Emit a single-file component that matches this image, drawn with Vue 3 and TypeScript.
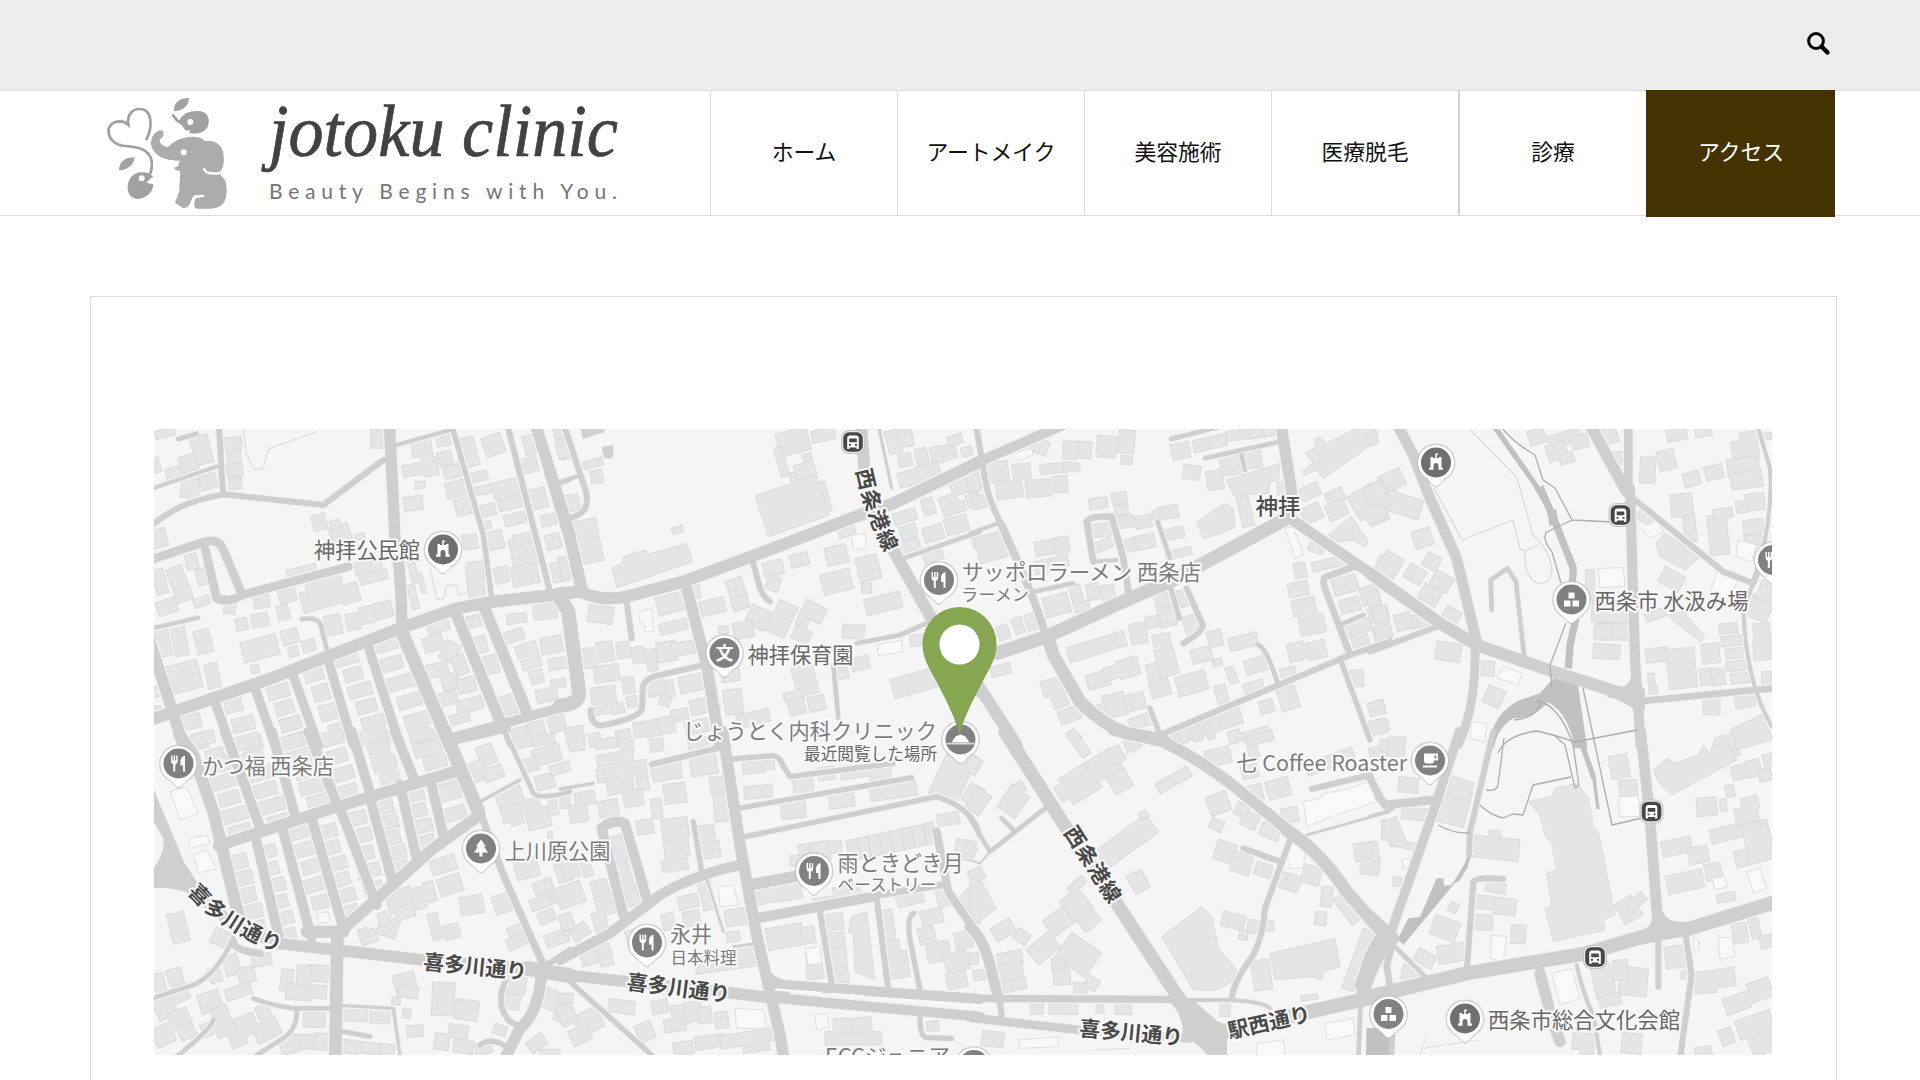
<script setup lang="ts">
interface Sheet {
  x: number
  y: number
  /** roads: [width, path] in third-of-a-pixel units */
  roads: [number, string][]
  /** single buildings: cx, cy, width, height, angle */
  houses: number[][]
  /** rows of buildings: x1, y1, x2, y2, count, width, height, angle */
  rows: number[][]
  shapes?: string[]
  areas?: string[]
  water?: string[]
  streams?: [number, string][]
  paths?: string[]
  outlines?: string[]
}

const sheets: Sheet[] = [
  {
    x: 150, y: 425,
    roads: [
      [18, 'M205,0C215,60 210,120 220,205'], [12, 'M0,193L200,125'],
      [18, 'M0,303C60,260 100,230 220,208L520,240L700,105'], [14, 'M85,42L140,26'],
      [26, 'M0,405L165,350Q205,340 218,370L275,505'], [26, 'M165,370L200,520Q240,535 275,510L595,425'],
      [13, 'M0,612L145,578'], [34, 'M718,0L730,230L735,350Q755,450 755,600'], [12, 'M740,60L900,15'],
      [16, 'M905,0L1000,330L1025,520'], [18, 'M1072,0L1200,500'], [34, 'M1157,0L1260,330'],
      [36, 'M0,885L350,765L750,610L920,550L1030,530L1260,505'], [34, 'M0,650L100,960'],
      [28, 'M195,830L240,960M315,790L375,960M425,740L505,960M530,690L610,960M650,650L750,960'],
      [40, 'M755,620L900,960'], [34, 'M915,560L1055,900M1000,540L1130,860'],
      [28, 'M900,940L1080,890L1260,840'], [28, 'M1235,520L1260,580'],
      [14, 'M455,582Q505,575 512,600L530,670'], [16, 'M1060,910L1080,960'], [12, 'M1220,180L1260,165'],
    ],
    houses: [
      [155,75,55,85,-15],[115,115,50,50,-20],[70,145,45,35,-15],[120,190,55,60,8],[175,170,50,45,-15],[25,340,50,55,-15],[20,120,20,45,-15],[45,25,60,24,-15],
      [680,42,36,55,0],[508,292,42,48,-15],[570,325,60,50,-20],[555,298,30,25,-15],[455,437,90,24,-14],[630,335,30,18,-15],
      [80,455,50,60,-20],[30,470,36,75,-15],[100,508,52,42,-18],[50,545,60,44,-18],[125,410,36,45,-15],[155,455,30,50,-15],[155,530,48,28,-20],
      [40,655,42,80,-10],[90,650,42,85,-10],[160,650,48,70,-15],[105,755,92,85,-15],[188,752,40,75,-12],[240,548,36,36,10],
      [275,598,36,36,-12],[330,585,50,40,-10],[335,530,48,38,-10],[400,562,36,45,-15],[412,512,52,40,-15],[330,670,110,62,-15],[315,732,24,24,-10],[420,635,50,45,-15],[430,680,30,30,-15],[476,662,40,36,-15],
      [510,520,115,62,-16],[600,505,55,58,-16],[520,470,110,40,-16],[550,600,50,60,-12],[608,590,40,50,-10],[650,570,40,50,-12],[700,555,55,50,-15],[670,455,85,32,-15],[655,425,80,40,-12],
      [815,70,60,50,-8],[785,135,55,35,-10],[840,125,45,55,-10],[885,100,44,42,-12],[880,45,40,35,-12],[905,140,50,40,-15],[810,180,30,22,-8],[790,235,58,42,-8],[920,192,66,48,-15],[940,245,48,50,-15],[960,80,40,90,-14],[1030,60,60,60,-20],
      [985,155,55,30,-14],[1070,190,85,50,-14],[1000,195,50,26,-12],[1015,255,45,36,-12],[1080,235,70,36,-14],[1095,282,65,34,-14],[1010,300,26,22,-12],[1035,345,50,55,-14],[1120,380,75,85,-12],[1120,340,60,30,-12],[1055,450,42,48,-12],[1125,450,80,60,-12],[960,350,44,45,-10],
      [978,465,48,110,-3],[790,440,22,70,-14],[790,515,22,75,-14],[815,475,14,60,-14],
      [1140,60,36,60,-14],[1140,120,45,45,-14],[1165,220,50,60,-14],[1195,285,45,34,-14],[1210,350,45,45,-14],[1230,440,50,60,-12],[1235,25,45,40,-14],[1245,80,35,45,-14],
      [1100,580,60,30,-8],[1185,560,70,45,-8],[1085,635,75,36,-18],[1130,675,65,40,-18],[1205,660,65,50,-10],[1145,715,60,30,-18],[1225,715,60,36,-10],[1160,755,40,40,-18],[1225,775,45,26,-10],[1190,810,65,40,-14],
      [865,605,66,36,-18],[850,655,60,45,-18],[900,680,50,60,25],[860,735,70,40,-14],[930,720,40,60,-20],[900,770,50,50,-16],[895,820,55,40,-16],[950,780,55,45,-14],[960,840,80,40,-16],[930,880,60,30,-16],
      [970,590,45,36,-15],[985,660,50,50,-15],[1020,720,50,55,-15],[1075,840,60,60,-16],[1110,930,50,45,-14],[1160,915,50,50,-14],[1220,895,50,50,-14],
    ],
    rows: [
      [250,55,256,175,4,50,38,-6],[490,745,560,920,4,58,50,-16],[590,700,690,940,6,72,40,-16],[700,660,830,940,6,84,42,-16],
      [385,800,440,945,4,66,42,-16],[250,840,310,955,3,66,44,-14],[125,890,150,950,2,60,44,-14],[20,800,25,860,2,28,34,-12],
    ],
    paths: ['M280,12L290,90L315,135L340,130L350,90L360,70L500,20', 'M840,430L860,520L880,525L890,480L915,480L930,510L955,500L945,420'],
  },
  {
    x: 560, y: 425,
    roads: [
      [18, 'M12,0L78,200Q95,270 20,280'], [12, 'M0,170L50,155'], [36, 'M-30,140L28,330L65,490'],
      [36, 'M0,505L60,500Q130,530 200,515L370,470L600,385L900,270L1000,235L1260,110'],
      [42, 'M0,520L25,560L57,800Q60,838 0,842'], [18, 'M200,530L215,640'], [34, 'M375,470L440,720L480,960'],
      [18, 'M575,400Q590,450 600,490Q610,515 630,530'], [18, 'M430,720L280,755Q245,770 248,800L246,850Q240,880 120,902Q92,895 92,855'],
      [36, 'M903,0L915,160L980,340L1120,590L1260,800'], [9, 'M955,0L995,190'],
      [13, 'M1030,400L1260,320'], [14, 'M890,655L1020,630L1110,590'], [14, 'M820,720L835,880'],
    ],
    houses: [
      [700,50,95,70,-15],[790,30,70,36,-12],[665,110,26,90,-15],[745,110,26,50,-15],[710,165,35,50,-15],[735,135,60,45,-20],[795,215,22,90,-15],
      [100,115,60,24,-15],[110,155,36,40,-10],[30,235,55,50,-12],[80,350,80,130,-12],[10,70,40,60,-12],[15,430,30,70,-12],[352,315,34,20,-18],
      [830,390,66,55,-14],[830,470,90,62,-14],[925,430,66,75,-14],[640,430,60,45,-14],[718,405,55,40,-14],[640,475,40,44,20],[970,535,110,50,-14],[920,490,30,30,0],
      [595,578,65,60,25],[655,600,65,60,25],[550,615,60,50,-12],[680,552,60,36,25],[760,560,70,50,28],[728,590,35,30,20],[725,630,55,40,25],[490,615,30,22,0],[880,620,66,42,4],[1080,645,60,34,-8],[1060,775,130,60,-16],
      [458,545,75,45,-14],[530,495,50,70,-20],[540,535,50,40,-20],[405,500,30,40,-10],[335,535,90,55,-14],[340,605,85,34,-14],[122,568,75,52,8],
      [735,765,66,90,-14],[700,810,60,24,-14],[710,845,50,50,-14],[770,835,50,45,-14],[840,745,50,36,-14],[900,715,55,40,-14],[580,880,100,40,-14],
      [80,700,50,60,-8],[135,680,50,60,-8],[190,675,40,50,-8],[140,745,75,50,-8],[235,690,40,50,-8],[130,810,75,50,-8],[275,705,30,65,-8],[320,680,60,60,-8],[370,670,70,40,-10],[205,780,36,50,-8],
      [125,855,40,26,-12],[172,850,40,32,-12],[215,830,30,34,-12],[330,790,24,50,-8],[395,775,75,50,-12],[290,790,55,46,-12],[315,828,34,30,20],[360,870,50,36,-12],[435,840,90,46,-14],[520,830,55,75,-8],[510,740,55,60,-8],
      [190,935,45,40,-12],[235,915,30,46,-8],[275,910,40,50,-12],[320,900,45,50,-12],[410,905,70,40,-12],[45,930,55,50,-12],[105,945,36,40,-12],
      [1000,50,40,70,-15],[1035,35,45,60,-10],[1035,105,40,40,-12],[1085,95,36,50,-14],[1130,90,36,50,-14],[1170,80,36,46,-14],[1185,45,45,30,-18],[1220,80,32,28,-14],[1045,160,60,45,-16],[1105,140,70,45,-16],
      [1215,175,90,55,-18],[1170,240,55,60,-20],[1105,245,36,50,-18],[1200,245,34,32,-18],[1240,225,40,40,-18],[1120,325,60,45,-16],[1190,300,70,50,-16],[1035,275,70,36,-16],[1045,320,50,40,-16],[1050,365,60,44,-16],[1120,395,60,28,-16],[1250,345,30,50,-16],[860,320,50,30,-16],
    ],
    rows: [],
    shapes: ['M585,212L770,150L808,270L625,335Z', 'M155,430L188,415L190,395L255,375L262,388L380,355L398,410L172,488Z'],
    areas: ['M62,12L135,12L132,22L68,42Z', 'M125,65L160,60L160,90L155,102L132,98Z'],
    outlines: ['M875,330L915,325L920,368L880,375Z', 'M950,660L1025,645L1028,680L955,692Z', 'M240,560L275,550L280,620L255,620L250,590L238,590Z'],
  },
  {
    x: 970, y: 425,
    roads: [
      [30, 'M0,122L50,100L280,0'], [18, 'M18,0L40,130Q50,220 100,310'], [24, 'M95,300L160,450Q200,540 230,640'], [12, 'M0,325L85,295'],
      [40, 'M80,685L230,635L480,520L600,470L960,275'], [38, 'M235,640L250,690L330,830Q400,900 470,925L580,945'],
      [14, 'M190,500L310,475'], [20, 'M370,410L350,290Q360,272 425,275L460,400L475,500'], [12, 'M370,410L440,405'],
      [14, 'M563,290L600,400'], [16, 'M600,480L628,580'], [18, 'M650,490L698,600Q700,620 640,655'],
      [34, 'M933,0L965,200L960,270'], [14, 'M603,42L800,-8M705,100L930,50M815,90L825,135'],
      [32, 'M960,280L1260,485'], [20, 'M1165,420L1070,455Q1055,460 1065,490L1140,690'], [18, 'M570,930L1140,690L1260,650'],
      [16, 'M1110,700L1200,945M540,850L570,930'], [14, 'M865,660Q890,670 925,780M1110,600L1180,570'], [36, 'M20,775L140,960'],
    ],
    houses: [
      [210,65,50,42,20],[300,75,42,55,5],[345,75,40,50,5],[410,65,60,65,5],[470,50,48,70,5],[470,105,34,26,5],[85,140,60,60,-8],[155,140,55,48,-8],[250,130,80,30,-5],[305,125,50,25,8],[118,195,80,50,-8],[205,190,75,52,-5],[270,178,44,50,-5],[30,230,46,40,-15],[10,170,40,60,-10],
      [70,365,100,80,-15],[225,368,60,44,-10],[275,360,44,50,-10],[385,235,55,34,-8],[448,220,46,36,-10],[455,255,40,30,-10],[468,290,46,36,-8],[520,290,50,38,-12],[595,262,60,40,-10],[560,268,28,24,-10],[615,325,55,34,-12],[525,350,60,42,-12],[475,362,44,40,-12],[625,385,80,24,-14],
      [395,315,54,40,-8],[400,360,54,30,-25],[260,540,76,60,-15],[320,510,34,60,-15],[220,425,50,40,-12],[370,500,40,50,-12],[415,505,40,50,-12],[335,545,46,30,-12],[270,410,50,35,-12],
      [100,622,36,44,-18],[145,602,30,48,-18],[185,590,34,50,-18],[92,735,60,32,-14],[380,665,180,46,-17],[475,728,65,56,-16],[385,765,70,46,-16],[420,745,36,40,-16],[590,710,58,85,-15],[550,745,36,60,-14],[570,790,60,50,-16],[575,645,54,36,-12],[505,625,50,62,-10],[550,590,44,36,-12],[590,570,50,70,-14],[575,520,44,50,-14],[610,520,40,40,-14],
      [665,775,92,60,-16],[695,690,62,42,-14],[735,640,44,48,-14],[742,712,28,22,-14],[785,750,26,50,-20],[820,650,88,40,-14],[860,720,70,45,-16],[850,785,60,30,-16],[755,810,34,60,-14],[890,845,42,40,-16],[955,820,56,70,-16],[955,745,46,36,-14],
      [665,600,46,60,-16],[645,520,36,50,-14],[435,840,66,70,-14],[495,830,60,50,-14],[510,890,66,36,-20],[390,850,36,24,-14],[250,785,70,50,-16],[270,830,46,36,-18],[300,870,66,42,-20],[315,935,34,26,40],
      [860,930,80,36,-16],[1220,845,46,34,-16],[1232,905,50,32,-16],[1160,760,40,50,-5],[1170,645,50,36,-18],[1235,625,50,44,-14],[1165,605,80,40,-16],
      [632,78,56,48,-12],[665,142,52,42,8],[735,165,50,58,-8],[780,120,60,60,-8],[845,105,60,50,-8],[935,190,26,40,0],[825,255,36,100,-14],[800,30,60,30,-8],[860,25,50,28,-8],[900,20,40,26,-8],[695,60,50,36,-12],[745,48,50,36,-12],
      [1020,200,60,40,-25],[1025,265,60,50,-25],[1095,215,55,40,-25],[1100,255,60,50,-25],[1190,230,90,85,-30],[1225,275,60,40,-25],[1250,180,40,60,-20],[1040,365,46,36,20],[1245,420,50,50,25],[1080,415,110,28,-14],
      [990,435,36,46,-12],[985,492,60,42,-12],[1002,545,70,50,-12],[1027,600,76,56,-12],[980,680,52,56,-14],[1040,675,56,54,-14],[1140,540,60,42,-14],[1200,510,55,55,-16],[1125,480,75,50,-16],[1225,565,60,40,-14],
    ],
    rows: [[635,925,800,870,6,34,60,-16],[500,950,600,940,1,40,30,0]],
    shapes: ['M1005,85L1040,65L1030,45L1050,35L1070,55L1180,0L1215,0L1225,45L1060,160L1040,135L1005,150L995,140L1030,115Z', 'M680,290L765,235L790,250L795,305L755,325L700,340Z', 'M770,165L930,115L925,165L900,170L895,205L790,210Z', 'M1075,330L1145,275L1195,350L1185,365L1150,345L1100,350Z'],
    outlines: ['M945,310L970,305L1000,390L975,400Z', 'M125,85L185,70L190,90L145,108Z'],
  },
  {
    x: 1370, y: 425,
    roads: [
      [36, 'M0,445L210,595L320,660L550,740L740,800L800,810'], [32, 'M82,0L130,90L180,220L260,400L320,650'],
      [26, 'M315,660Q320,840 265,960'], [18, 'M0,680L215,600'], [26, 'M775,0L775,200'], [30, 'M780,190L795,700L812,960'],
      [34, 'M660,0L770,200'], [18, 'M795,225L1060,440L1150,475L1170,420'], [20, 'M800,830L1210,790'],
      [12, 'M1162,0L1200,130Q1210,280 1160,440L1120,560Q1130,780 1206,905'],
      [14, 'M365,555L362,465L412,430L438,470L462,690'],
    ],
    houses: [
      [70,165,62,55,-25],[60,420,60,70,30],[158,340,56,54,-18],[185,410,46,45,30],[135,448,56,48,30],[215,470,60,50,30],[180,510,60,50,30],[100,240,110,60,18],[20,215,60,80,-25],[15,265,60,50,-25],[5,40,30,40,-20],
      [245,570,50,40,30],[135,590,30,40,-16],[100,590,50,50,-16],[30,570,44,50,-14],[40,620,50,40,-14],[10,520,40,46,-14],[160,580,40,50,-14],[235,680,76,55,8],[348,730,50,44,5],[372,815,56,56,25],[20,850,50,40,-14],[25,905,50,44,-14],[80,955,50,20,-14],
      [500,35,50,46,-18],[585,40,100,40,-18],[560,80,60,50,-18],[590,100,44,30,-18],[720,30,44,50,-18],[745,100,34,40,-10],[630,50,50,40,-15],
      [660,480,26,90,0],[720,560,110,65,3],[700,620,55,50,3],[750,620,50,50,3],[710,680,80,44,3],
      [833,135,46,80,3],[890,105,52,60,-14],[965,162,50,42,-16],[1032,142,54,42,-14],[1120,125,96,52,-6],[1130,165,95,50,-8],[1155,230,56,50,-6],[935,240,66,68,-6],[960,310,36,80,-6],[1045,330,58,120,-6],[1058,265,60,30,-10],[1116,245,36,36,-6],[1150,305,60,44,-6],[1150,345,54,30,-6],[1125,70,80,50,-8],[1140,35,60,30,-8],[1185,35,40,20,-6],[920,30,60,36,-10],[1000,20,50,30,-10],
      [905,463,70,50,30],[855,570,60,26,-20],[860,690,66,42,-6],[935,730,85,120,-6],[1022,685,54,60,-6],[1010,755,40,50,-6],[1045,755,40,50,-6],[845,775,20,60,-6],[850,795,26,24,0],[1025,845,50,50,0],[1175,620,50,50,-6],[1180,675,60,60,-6],[1125,830,60,36,-10],[1140,910,110,44,-25],[1190,770,30,60,0],
      [1170,550,66,70,20],[1190,500,50,60,20],[825,280,50,30,28],
    ],
    rows: [[1075,610,1110,760,5,66,32,-6]],
    shapes: ['M858,355L885,325L980,385L985,400L945,435L870,395Z', 'M890,570L940,560L1005,635L990,650L950,620Z'],
    outlines: ['M685,430L760,428L765,485L690,488Z', 'M1105,345L1160,360L1145,410L1098,395Z', 'M380,760L400,725L455,745L445,780L420,770Z', 'M305,890L350,895L345,950L300,940Z', 'M1040,440L1105,460L1080,520L1020,510Z', 'M810,310L840,340L880,320L860,290'],
    water: ['M550,760L620,755L652,970L612,970Q600,870 535,832Q490,882 430,880Q380,910 372,970L352,970Q370,860 450,825L510,805Z'],
    streams: [[16, 'M370,0L490,170L550,270'], [22, 'M510,185L555,290L610,430L605,500'], [22, 'M618,580L600,660L595,730'], [28, 'M545,255L552,300']],
    paths: [],
  },
  {
    x: 150, y: 735,
    roads: [
      [36, 'M88,0L130,60L190,230L265,540'], [30, 'M225,-10L335,290M365,-10L435,240M475,-10L562,210M605,-10L665,190M735,-10L795,140'],
      [40, 'M885,-10L985,230'], [30, 'M320,320L385,600M400,290L485,610M485,250L580,580M570,220L680,510M660,190L728,440M750,150L800,370M840,130L880,300'],
      [34, 'M205,332L540,222L680,180L930,105'], [24, 'M920,15L1070,-20'], [34, 'M570,590L850,340L990,240'],
      [34, 'M100,440L250,570L380,625L560,645L820,675L1130,702'], [22, 'M250,620Q250,645 330,655'],
      [14, 'M250,610Q200,720 130,750L0,792'], [36, 'M470,590L580,590'], [38, 'M562,600L556,970'],
      [14, 'M310,790Q360,810 430,820L540,820M440,820Q445,880 400,910L320,960M580,890L660,905M190,855Q180,885 80,965'],
      [10, 'M580,812L730,820L750,960M990,200L1110,135'], [22, 'M990,230L1060,420L1180,690'],
      [14, 'M1070,0L1150,175Q1170,195 1260,170'], [44, 'M1130,700L1260,722'],
      [34, 'M1175,700Q1170,830 1110,880L1070,960'], [18, 'M1065,740Q1035,810 1080,860L1120,880M1190,690L1260,645'], [16, 'M990,930Q1030,900 1080,945'],
    ],
    houses: [
      [85,578,52,90,-14],[215,610,60,50,25],[28,745,34,60,-14],[75,725,45,48,-16],[245,690,46,60,-18],[195,720,36,46,-18],[290,720,50,48,-16],[265,770,80,36,-18],[180,800,66,60,-18],[90,775,50,50,-25],[45,820,60,60,-25],[90,850,60,50,-25],[40,900,60,60,-25],[110,890,50,44,-25],[170,885,30,40,-25],[335,675,60,36,-12],
      [225,880,60,44,-22],[290,870,60,60,-22],[265,915,50,40,-22],[350,885,80,56,-28],[340,830,40,40,-22],[210,835,50,40,-20],[410,735,36,66,8],[445,770,75,50,4],[505,715,60,50,4],[460,720,40,60,4],[500,770,60,40,4],
      [493,855,66,44,2],[615,840,75,38,2],[690,845,60,42,2],[460,920,60,44,2],[515,920,46,50,2],[420,930,60,50,-15],[600,935,50,40,6],[660,940,60,34,6],[710,945,46,36,6],
      [765,745,65,60,-15],[775,770,60,36,10],[738,798,26,22,6],[770,835,24,30,8],[880,792,68,100,2],[950,825,70,60,8],[795,888,50,34,-6],[875,920,44,50,8],[925,890,60,40,8],[1000,940,50,36,-15],[940,935,60,40,8],
      [855,575,30,80,-14],[905,590,48,44,-14],[880,390,76,46,-18],[900,450,70,54,-18],[965,510,70,56,-10],[750,495,80,65,-16],[805,490,36,65,-16],[840,470,30,60,-16],[715,575,60,60,20],[655,605,50,40,-20],[765,530,60,40,-14],[700,550,30,36,-16],[640,595,30,30,-18],
      [1060,505,60,56,-18],[1100,590,50,40,-25],[1100,620,60,36,-25],[1130,400,70,60,-16],[1180,455,60,40,-20],[1180,500,80,36,-22],[1190,545,50,36,-22],[1220,610,70,40,-20],[1240,410,44,60,-16],[1220,480,44,30,-20],[1250,570,30,60,-14],
      [1185,140,56,44,-14],[1080,190,80,75,-20],[1165,250,70,60,-14],[1085,235,60,50,-14],[1100,250,40,40,-14],[1140,210,60,36,-14],[1210,215,24,50,-14],[1200,300,14,20,0],[1245,200,30,40,0],
      [1010,60,50,60,-22],[980,110,60,60,-22],[1030,115,60,40,-22],[1120,20,60,36,-16],[1190,60,85,50,-16],[1140,90,50,40,-16],[1230,100,60,30,-16],[1180,15,70,30,-10],[1095,750,65,50,10],[1085,800,50,45,10],[1215,800,80,60,25],[1240,840,50,50,25],[1160,925,56,40,-35],[1050,885,40,30,20],[1200,955,60,24,0],
      [900,170,60,50,-14],[915,235,66,40,-18],[890,135,60,26,-14],
    ],
    rows: [
      [160,10,195,60,2,70,40,-14],[205,90,270,290,5,80,42,-16],[290,20,385,260,6,80,42,-16],[425,20,505,200,5,76,42,-16],[545,10,595,170,4,70,42,-16],[670,0,720,130,4,76,42,-16],[810,0,855,80,3,82,42,-16],
      [265,380,320,580,5,64,44,-14],[350,350,415,600,6,60,40,-14],[450,290,515,500,5,70,42,-16],[530,290,600,530,6,66,40,-16],[620,250,670,460,5,68,42,-14],[705,215,750,400,5,60,42,-14],[790,180,830,320,4,64,40,-14],
    ],
    outlines: ['M60,170L110,155L145,235L90,255Z', 'M115,310L170,300L180,325L120,340ZM130,360L170,345L200,400L145,415Z', 'M500,535L535,530L540,560L505,565Z'],
  },
  {
    x: 560, y: 735,
    roads: [
      [34, 'M488,-10L540,330L590,600L660,900L672,970'], [34, 'M0,718L200,740L500,772L620,787'], [30, 'M610,785L930,815L1260,845'],
      [30, 'M640,748L1260,792'], [18, 'M275,88L480,38'], [10, 'M0,162L100,145'],
      [16, 'M515,72L640,62Q660,65 668,90L690,125L1000,85'], [16, 'M535,220L1055,128M555,305L1130,185Q1240,220 1258,300'],
      [30, 'M0,675L150,595L300,480Q400,420 540,390'], [30, 'M190,540L125,280Q160,250 195,265L260,490'],
      [16, 'M400,260L425,410'], [34, 'M570,450L730,420'], [30, 'M590,550L940,485'], [22, 'M940,482L1140,450'],
      [24, 'M1130,290L1165,470L1260,610'], [18, 'M780,530L815,745M950,490L985,765'],
      [16, 'M1062,535Q1035,545 1055,640L1080,765M30,740L275,960M1080,850Q1080,905 1100,908L1175,910'],
      [8, 'M440,430L490,590M520,635L590,625'],
    ],
    houses: [
      [165,70,110,36,-10],[165,115,110,40,-10],[180,150,80,50,-10],[55,235,56,54,-10],[75,190,60,40,-10],[245,120,36,90,-8],[320,110,90,50,-10],[430,85,80,70,-10],[345,175,66,60,-8],[290,220,32,60,-8],[220,190,60,50,-10],[50,30,46,36,-10],[140,25,66,30,-8],[200,30,40,40,-8],[290,30,40,40,-8],[415,30,60,40,-10],
      [480,190,40,60,-5],[485,235,44,50,-5],[345,280,80,60,-8],[350,340,76,50,-8],[440,300,50,60,-8],[450,345,60,50,-8],[470,150,40,50,-5],[255,275,50,44,-8],[145,220,60,50,-10],[345,390,80,36,-8],
      [580,90,66,50,-6],[625,80,34,50,-6],[595,170,84,38,-6],[700,225,74,50,-6],[845,195,76,46,-8],[1000,168,140,44,-8],[730,155,60,50,-8],[960,115,66,36,-8],[880,110,80,40,-8],[800,115,50,40,-8],[1165,252,66,36,-8],[1180,120,90,160,25],[1240,180,50,60,30],[1215,345,60,60,10],
      [780,340,130,36,-6],[715,375,50,30,-8],[780,350,60,60,-8],[620,480,60,50,-10],[690,470,70,50,-10],[860,470,80,40,-12],
      [675,605,110,66,-10],[745,600,40,50,-10],[765,710,50,44,-8],[760,665,44,40,-6],[825,560,50,50,-8],[830,620,50,55,-6],[835,670,50,60,-6],[840,720,50,50,-6],[790,505,60,36,-10],[980,580,46,110,-8],[1010,690,70,80,-8],[1000,640,40,50,-8],
      [1050,490,80,40,-16],[1115,545,66,46,-14],[1100,600,50,50,-14],[1135,650,70,60,-10],[1190,680,70,60,-16],[1190,735,60,50,-14],[1210,615,50,50,-12],[1155,485,50,60,-16],
      [30,400,50,60,-16],[80,400,30,50,-16],[30,480,80,66,-20],[120,460,50,50,-16],[135,510,55,60,-16],[120,560,40,60,-16],[60,590,55,40,-35],[20,560,40,50,-16],[85,660,50,60,-16],[135,660,40,66,-14],[215,610,30,50,-16],[325,560,36,50,-12],[395,550,50,45,-12],[385,500,60,40,-14],[215,480,40,66,-16],[195,420,36,90,-16],[180,340,40,80,-14],[440,475,40,100,-14],[540,545,90,50,-8],[520,605,40,30,-10],[500,680,190,50,-8],[560,660,60,50,-8],
      [185,815,80,40,8],[85,860,80,66,-25],[60,900,60,50,-25],[20,840,50,60,-25],[255,890,50,55,-25],[300,815,50,40,-12],[360,840,50,60,-6],[400,830,50,60,-6],[435,840,40,50,-6],[345,870,66,40,-8],[485,855,40,50,-6],[450,920,90,40,-8],[560,910,160,40,-10],[370,940,60,40,-10],[590,940,80,20,-8],[880,910,170,40,0],[850,875,60,50,0],[905,870,60,46,-6],[1118,873,36,30,-4],[20,790,40,30,0],
    ],
    rows: [[880,345,1110,295,8,36,66,-10]],
    shapes: ['M875,545L920,530L945,735L885,710L880,600L865,590Z', 'M1260,420L1260,570L1195,490Z'],
    outlines: ['M765,840L800,835L808,875L770,885Z', 'M525,820L610,825L620,880L530,880Z', 'M475,455L520,450L535,510L480,515Z', 'M735,640L780,635L785,685L745,690Z'],
  },
  {
    x: 970, y: 735,
    roads: [
      [40, 'M105,-10L270,250L430,490L640,810'], [42, 'M760,895L900,860L1020,830L1260,775'], [26, 'M0,848L330,885L660,910'],
      [22, 'M0,790L600,793'], [12, 'M600,795L780,795Q880,800 900,820'], [34, 'M430,-15L580,20Q700,80 800,160L960,290'], [38, 'M950,285Q1050,350 1130,470L1235,590'],
      [18, 'M785,790Q790,740 850,660Q880,600 885,520L960,315'], [18, 'M820,340L930,380'], [18, 'M1025,162L1200,120L1225,190L1260,212'],
      [8, 'M1010,300L1260,230'], [38, 'M1240,600Q1175,690 1180,790'], [14, 'M1172,800L1165,970'],
      [14, 'M225,220L60,350L0,250M95,250L130,285'], [6, 'M60,350L30,385L0,375'], [32, 'M0,575Q40,610 60,690L85,790'], [18, 'M88,790L95,840'],
    ],
    houses: [
      [330,145,100,90,-32],[290,165,60,50,-32],[400,90,90,70,-32],[450,140,60,60,-30],[610,135,110,34,-30],[325,25,30,90,-35],[440,60,40,50,-30],[485,30,40,36,-20],[470,320,190,66,-36],[505,440,50,62,-28],[520,240,26,22,-30],
      [25,200,50,70,35],[130,200,66,80,35],[145,160,40,34,-30],[10,90,40,50,30],[0,345,36,30,30],[20,420,44,40,-28],
      [100,585,66,45,-30],[155,605,44,36,35],[220,640,85,60,-40],[265,560,75,60,-38],[320,510,70,80,-38],[360,560,60,36,-38],[320,450,60,24,-40],[325,660,110,90,35],[120,670,75,40,-12],[120,710,78,50,-10],[135,752,70,30,-12],[30,720,40,30,-12],[275,720,50,60,-5],[365,745,40,36,30],[265,690,40,36,0],[330,760,40,36,0],[10,670,30,36,0],
      [280,820,86,36,1],[390,822,24,24,0],[460,820,50,36,0],[200,822,40,30,0],[68,912,66,46,6],
      [745,205,64,60,-20],[740,270,40,34,25],[840,255,50,46,25],[815,225,40,40,25],[900,290,60,40,25],[765,350,60,60,18],[815,385,60,60,18],[880,405,50,40,18],[955,440,70,50,18],[1025,420,56,56,15],[930,430,40,36,18],[960,240,50,44,-10],[925,160,70,56,-16],[855,175,46,50,-14],[745,65,76,50,-14],[840,110,50,40,-14],[1080,80,150,40,-20],[870,10,80,30,-14],[1070,485,34,60,5],[1052,550,34,40,5],[1135,520,44,95,-38],[1165,675,36,190,20],
      [790,558,70,44,15],[850,575,34,40,5],[900,573,24,30,0],[820,600,26,30,5],[875,720,55,90,-8],[1018,787,50,16,-8],[765,820,30,50,0],[1185,350,64,55,-8],[1200,395,56,50,10],[1225,60,50,50,-14],[1250,285,30,60,0],[1245,30,30,36,0],
    ],
    rows: [[600,5,720,-10,4,30,50,-16],[795,5,850,50,2,40,40,-16]],
    shapes: ['M575,605L695,515L725,545L745,640L800,705L785,740L740,765L670,765Z', 'M900,655L1095,610L1110,695L1060,710L1055,735L1025,725L915,735Z', 'M0,430L35,440L78,520L20,565L0,540Z'],
    areas: [],
    water: ['M1190,880L1260,880L1260,970L1188,970Z'],
    outlines: ['M145,915L265,905L265,935L150,940Z', 'M860,925L940,915L945,965L860,965Z', 'M1065,865L1150,850L1155,900L1070,915Z', 'M1000,200L1050,190L1060,175L1120,165L1200,140L1220,200L1100,240L1010,275Z', 'M370,945L480,940', 'M950,360L965,320L1005,345L1000,400L960,400Z'],
  },
  {
    x: 1370, y: 735,
    roads: [
      [28, 'M268,-10L190,230L60,600'], [50, 'M40,625Q0,690 -20,750'], [18, 'M370,-10L300,290L297,360'], [42, 'M0,785L290,715L650,655L870,590L960,580L1210,503'],
      [32, 'M812,-10L840,250L865,590'], [22, 'M0,130L40,205'], [26, 'M45,210L205,193'], [34, 'M510,715L545,850L570,920'], [12, 'M620,690Q640,780 670,840L690,960'],
      [18, 'M945,590L965,720L930,970M865,610L865,755M290,710L310,440Q320,425 400,432'], [14, 'M70,630L180,740'], [36, 'M-10,535L70,610'],
      [20, 'M70,620L50,690L62,770'], [16, 'M68,890L64,970'], [8, 'M0,243L70,222'], [22, 'M960,590L900,570'],
    ],
    houses: [
      [80,35,50,60,5],[115,150,60,45,5],[150,238,110,36,3],[70,290,50,80,-22],[105,330,90,20,12],[255,215,80,110,15],[265,160,80,60,20],[378,340,138,66,6],[375,298,34,24,0],[378,458,60,30,10],[348,502,55,40,6],[405,515,66,50,8],[340,562,56,46,3],[445,598,44,56,3],[250,518,26,30,30],[225,580,80,60,20],[245,655,84,55,-10],[165,670,60,40,30],[125,715,60,44,12],[82,440,28,28,5],[15,350,20,60,-8],
      [775,525,60,70,-30],[800,500,60,30,-40],[748,95,56,70,-10],[775,160,54,50,-5],[1010,215,60,55,-5],[1060,210,20,36,-5],[1070,295,100,44,-14],[1165,320,80,120,-14],[1130,240,70,50,-14],[1140,205,50,40,-14],[1115,370,40,50,-14],[1080,168,26,36,-14],[1115,110,60,44,-14],[1150,100,44,50,-14],[1185,120,40,36,-14],[1195,75,30,36,-14],
      [920,335,90,46,-12],[985,360,60,50,-12],[945,440,110,56,-12],[1030,410,50,50,-12],[1068,487,56,26,-12],[1090,30,20,70,-20],[1150,15,110,30,-16],
      [920,665,70,66,-8],[1005,742,64,65,-5],[1068,727,54,56,-8],[790,740,84,85,5],[752,705,44,60,-5],[700,740,60,100,-12],[720,795,66,36,-12],[945,720,24,24,0],[1100,805,76,50,-20],[1155,870,110,60,-20],[1170,765,70,60,-20],[1070,905,40,50,-20],[1180,925,80,60,-20],[1000,950,50,30,-10],[785,925,60,60,5],[640,920,66,50,5],[1110,595,44,60,-8],[1155,580,30,60,-14],[1190,620,40,40,-14],[650,945,40,30,0],
    ],
    rows: [],
    shapes: ['M475,200L545,185L555,160L620,145L655,190L670,275L685,290L735,540L700,555L705,585L550,620L525,520L545,510L530,415L560,405L545,325L525,300L510,240Z', 'M850,105L890,70L915,85L985,60L1000,30L1020,55L1035,10L1060,0L1100,75L905,180L865,140Z'],
    water: ['M200,430L220,430L222,452L245,450L285,385L295,395L100,630L84,612L115,550L150,545Z', 'M-10,885L45,885L45,970L-10,970Z'],
    streams: [[16, 'M622,-10L672,130'], [10, 'M672,130L684,222'], [10, 'M297,360Q292,395 260,440']],
    outlines: ['M745,185L805,182L812,245L750,245Z', 'M95,375L118,370L125,395L100,400Z', 'M1130,410L1170,400L1190,460L1150,475Z', 'M545,715L605,700L630,790L570,810Z', 'M365,600L410,605L400,680L360,670Z', 'M1045,610L1085,605L1095,665L1050,672Z', 'M970,610L985,615L988,645L972,645Z', 'M1025,430L1065,425L1072,455L1035,465Z', 'M150,960L170,900M160,940L320,915'],
    paths: [],
  },
]

const creeks: string[] = [
  'M1503,429Q1513,442 1535,455L1543,480L1555,488L1572,520L1612,522M1572,520L1547,532Q1541,538 1552,552L1561,583M1566,623L1550,665L1552,688',
  'M1583,688L1612,825L1642,818M1541,702Q1537,718 1514,720M1537,701Q1560,705 1573,745L1579,785L1575,788L1565,745L1554,735',
  'M1498,753Q1506,735 1537,731Q1556,735 1575,742L1637,730M1504,738L1498,785Q1496,792 1486,790',
  'M1571,777L1533,785L1523,815L1513,814L1503,818Q1490,815 1480,805M1438,825Q1455,834 1470,833',
]
const parkLine = 'M1470,429L1517,478L1533,535Q1550,550 1552,570Q1550,585 1537,583Q1523,575 1525,551L1520,549L1513,520L1462,540L1434,488M1525,551L1537,545'

function expand(sheet: Sheet): number[][] {
  const out = sheet.houses.slice()
  for (const [x1, y1, x2, y2, n, w, h, a] of sheet.rows) {
    for (let i = 0; i < n; i++) {
      const t = n > 1 ? i / (n - 1) : 0
      const shrink = [1, 0.84, 0.95, 0.78][(i + n) % 4]
      out.push([x1 + (x2 - x1) * t, y1 + (y2 - y1) * t, w * shrink, h * 0.96, a])
    }
  }
  return out
}

const navItems = ['ホーム', 'アートメイク', '美容施術', '医療脱毛', '診療', 'アクセス']

type Kind = 'museum' | 'food' | 'school' | 'blocks' | 'tree' | 'cup' | 'clinic' | 'plain'
const pins: { k: Kind; x: number; y: number }[] = [
  { k: 'museum', x: 443, y: 549.5 }, { k: 'museum', x: 1436, y: 462.5 }, { k: 'museum', x: 1465, y: 1018.5 },
  { k: 'food', x: 939, y: 580 }, { k: 'food', x: 178.5, y: 763.5 }, { k: 'food', x: 814, y: 871 },
  { k: 'food', x: 647, y: 942.5 }, { k: 'food', x: 1773, y: 560 }, { k: 'school', x: 724.5, y: 653 },
  { k: 'blocks', x: 1571.5, y: 599.5 }, { k: 'blocks', x: 1388.5, y: 1014 }, { k: 'tree', x: 481, y: 848.5 },
  { k: 'cup', x: 1430, y: 760.5 }, { k: 'clinic', x: 960.5, y: 739.5 }, { k: 'plain', x: 974, y: 1065 },
]
const stops = [[853, 442], [1620.5, 515], [1651.5, 811.5], [1595, 957]]

interface Label { t: string; x: number; y: number; w: number; s?: number; c?: string }
const labels: Label[] = [
  { t: '神拝公民館', x: 314, y: 558, w: 106, c: 'mid' },
  { t: 'サッポロラーメン 西条店', x: 962, y: 579.5, w: 239 },
  { t: 'ラーメン', x: 961, y: 600.5, w: 68, s: 17 },
  { t: '神拝', x: 1255.5, y: 514, w: 45, s: 22, c: 'town' },
  { t: '神拝保育園', x: 747.5, y: 662.5, w: 106, c: 'mid' },
  { t: 'じょうとく内科クリニック', x: 683, y: 738.5, w: 254 },
  { t: '最近閲覧した場所', x: 804, y: 759.5, w: 133, s: 16.5, c: 'mid' },
  { t: 'かつ福 西条店', x: 202, y: 773.5, w: 132 },
  { t: '上川原公園', x: 504.5, y: 858.5, w: 106 },
  { t: '雨ときどき月', x: 837.5, y: 870.5, w: 126 },
  { t: 'ベーストリー', x: 837.5, y: 891, w: 99, s: 16.5 },
  { t: '永井', x: 670, y: 942, w: 42 },
  { t: '日本料理', x: 670.5, y: 963.5, w: 66, s: 16.5 },
  { t: '七 Coffee Roaster', x: 1236, y: 771, w: 171 },
  { t: '西条市 水汲み場', x: 1594.5, y: 609, w: 154, c: 'mid' },
  { t: '西条市総合文化会館', x: 1488, y: 1027.5, w: 192, c: 'mid' },
  { t: 'ECCジュニア', x: 825, y: 1063.5, w: 125 },
]
const streets = [
  { t: '西条港線', d: 'M864,469Q870,503 894,554', w: 86 },
  { t: '西条港線', d: 'M1070,828L1120,906', w: 86 },
  { t: '喜多川通り', d: 'M193,887Q226,926 288,947', w: 107 },
  { t: '喜多川通り', d: 'M423.500,961L533,972', w: 104 },
  { t: '喜多川通り', d: 'M627,981L736,995', w: 104 },
  { t: '喜多川通り', d: 'M1079.500,1027.500L1191,1038', w: 104 },
  { t: '駅西通り', d: 'M1228,1031L1318,1011', w: 84 },
]
</script>

<template>
  <div class="page">
    <div class="topbar">
      <svg class="search" width="26" height="26" viewBox="0 0 26 26">
        <circle cx="10" cy="10" r="7.4" fill="none" stroke="#000" stroke-width="3" />
        <path d="M15.5,15.5L21.500,21.500" stroke="#000" stroke-width="4.4" stroke-linecap="round" />
      </svg>
    </div>
    <header class="header">
      <a class="logo">
        <svg width="540" height="124" viewBox="100 91 540 124">
          <g transform="translate(100 90) scale(.33333)">
            <g fill="none" stroke="#a0a0a0" stroke-width="8" stroke-linecap="round">
              <path d="M140,147C158,110 156,66 128,58C98,52 80,74 85,104C66,86 34,94 26,116C22,146 46,166 76,168C120,171 140,180 152,202C158,220 156,236 151,250" />
              <path d="M219,76L232,92L250,104" />
            </g>
            <g fill="#a1a1a1">
              <path d="M222,64C220,36 240,24 267,24C266,50 246,62 222,64Z" />
              <path d="M57,241C58,214 76,202 104,202C100,228 82,240 57,241Z" />
              <path d="M236,94C248,70 270,62 294,63C318,64 328,78 326,98C324,122 304,133 268,130L270,119L260,123C250,116 248,106 236,94Z" />
              <path d="M120,247C138,245 152,250 160,261L150,266L139,278L160,283C160,306 140,325 112,327C92,324 82,310 83,288C86,262 102,250 120,247Z" />
            </g>
            <path fill="#acacac" d="M153,160C154,136 170,120 184,121C194,124 194,140 180,148C176,158 188,168 202,172C216,158 238,142 276,140C298,140 308,146 316,154C344,148 366,164 370,190C374,218 370,240 356,247L376,272C384,302 380,330 366,344C354,356 332,357 290,356C282,354 280,342 287,325L312,321L312,314L285,316C276,320 276,330 268,344C262,352 256,354 248,354L225,338L238,304C238,278 242,260 240,243L228,241L222,233L234,229L240,212C200,214 156,198 153,160Z" />
            <path d="M312,237C318,250 334,253 358,249" fill="none" stroke="#fff" stroke-width="7" stroke-linecap="round" />
            <g fill="#fff"><circle cx="251" cy="187" r="9" /><circle cx="271" cy="96" r="9" /><circle cx="125" cy="265" r="9" /></g>
          </g>
          <text class="brand" x="269" y="156" textLength="349" lengthAdjust="spacingAndGlyphs">jotoku clinic</text>
          <text class="tagline" x="269" y="198.5" textLength="348">Beauty Begins with You.</text>
        </svg>
      </a>
      <nav class="nav">
        <a v-for="(item, i) in navItems" :key="item" :class="{ active: i === 5, heavy: i === 4 }">{{ item }}</a>
      </nav>
    </header>
    <main class="content">
      <svg class="map" width="1618" height="626" viewBox="154 429 1618 626">
        <rect x="154" y="429" width="1618" height="626" fill="#f5f5f5" />
        <g v-for="(s, i) in sheets" :key="'b' + i" :transform="`translate(${s.x} ${s.y}) scale(.33333)`">
          <g class="house">
            <rect v-for="(h, j) in expand(s)" :key="j" :x="h[0] - h[2] / 2" :y="h[1] - h[3] / 2" :width="h[2]" :height="h[3]" :transform="`rotate(${h[4]} ${h[0]} ${h[1]})`" />
            <path v-for="(d, j) in s.shapes" :key="'s' + j" :d="d" />
          </g>
          <path v-for="(d, j) in s.areas" :key="'a' + j" :d="d" fill="#d0d0d0" />
          <path v-for="(d, j) in s.outlines" :key="'o' + j" :d="d" class="outline" />
          <path v-for="(d, j) in s.paths" :key="'p' + j" :d="d" fill="none" stroke="#dedede" stroke-width="4" />
        </g>
        <path :d="parkLine" fill="none" stroke="#d9d9d9" stroke-width="1.2" />
        <g v-for="(s, i) in sheets" :key="'c' + i" :transform="`translate(${s.x} ${s.y}) scale(.33333)`" class="casing">
          <path v-for="(r, j) in s.roads" :key="j" :d="r[1]" :stroke-width="r[0] + 8" />
        </g>
        <g v-for="(s, i) in sheets" :key="'w' + i" :transform="`translate(${s.x} ${s.y}) scale(.33333)`">
          <path v-for="(d, j) in s.water" :key="j" :d="d" fill="#c1c1c1" />
          <path v-for="(r, j) in s.streams" :key="'t' + j" :d="r[1]" :stroke-width="r[0]" fill="none" stroke="#c1c1c1" stroke-linejoin="round" />
        </g>
        <g v-for="(s, i) in sheets" :key="'r' + i" :transform="`translate(${s.x} ${s.y}) scale(.33333)`" class="road">
          <path v-for="(r, j) in s.roads" :key="j" :d="r[1]" :stroke-width="r[0]" />
        </g>
        <g fill="#cfcfcf">
          <path d="M154,790L184,862L197,882L190,893Q170,887 154,888L154,868Q166,850 163,838L154,822Z" />
          <path d="M1166,998L1191,998L1217,1021L1227,1025L1227,1055L1207,1055Q1200,1045 1183,1035Q1183,1015 1170,1002Z" />
          <path d="M1607,692Q1630,691 1632,672L1645,690L1645,710L1636,712Q1625,700 1607,697Z" />
          <path d="M1640,932Q1653,928 1653,910L1664,912Q1665,923 1690,922L1690,935L1640,945Z" />
          <path d="M765,965Q772,978 790,982L790,995L765,995Z" />
        </g>
        <path v-for="(d, i) in creeks" :key="'k' + i" :d="d" class="creek" />
        <path d="M775,989.5L822,993M832,994L864,996.5M874,998L985,1006" stroke="#f8f8f8" stroke-width="2.4" fill="none" />

        <g class="street">
          <template v-for="(s, i) in streets" :key="i">
            <path :id="'street-' + i" :d="s.d" fill="none" stroke="none" />
            <text dy="8"><textPath :href="'#street-' + i" :textLength="s.w">{{ s.t }}</textPath></text>
          </template>
        </g>
        <text v-for="l in labels" :key="l.t" class="label" :class="l.c" :x="l.x" :y="l.y" :font-size="l.s || 21.2" :textLength="l.w" lengthAdjust="spacingAndGlyphs">{{ l.t }}</text>

        <g v-for="(p, i) in pins" :key="'pin' + i" :transform="`translate(${p.x} ${p.y})`">
          <path class="pin-shadow" d="M0,25C-3,25 -5,20 -11,16.500A19.500,19.500 0 1 1 11,16.500C5,20 3,25 0,25Z" />
          <path fill="#fff" d="M0,23.500C-3,23.500 -5,19 -10.500,15A18,18 0 1 1 10.500,15C5,19 3,23.500 0,23.500Z" />
          <circle r="15" :fill="p.k === 'museum' ? '#6f6f6f' : '#818181'" />
          <path
            v-if="p.k === 'museum'"
            fill="#fff"
            d="M-.8,-9H2V-7.500H.7V-4.500H3V-5.500H5.500V5H7V7.300H2.500V3Q2.500,.5 0,.5Q-2.500,.5 -2.500,3V7.300H-7V5H-5.500V-5.500H-3V-4.500H-.8Z"
          />
          <g v-else-if="p.k === 'food'" fill="#fff">
            <path d="M-7.500,-8H-6V-3H-4.900V-8H-3.400V-3H-2.300V-8H-.8V-2.500Q-.8,0 -3.200,.8V8H-5.200V.8Q-7.500,0 -7.500,-2.500Z" />
            <path d="M6.500,-8V8H4.500V2H2V-3Q2.500,-7 6.500,-8Z" />
          </g>
          <text v-else-if="p.k === 'school'" class="glyph" x="-9" y="6.500">文</text>
          <g v-else-if="p.k === 'blocks'" fill="#fff">
            <rect x="-3" y="-7" width="6" height="6" /><rect x="-7.500" y="1" width="6.500" height="6" /><rect x="1" y="1" width="6.500" height="6" />
          </g>
          <path v-else-if="p.k === 'tree'" fill="#fff" d="M0,-9L5,-2H3L7,4H1.500V8H-1.500V4H-7L-3,-2H-5Z" />
          <g v-else-if="p.k === 'cup'" fill="#fff">
            <path fill-rule="evenodd" d="M-6,-7H8V0H4Q4,3 1,3H-3Q-6,3 -6,0ZM4.500,-5V-2H6.300V-5Z" /><rect x="-7" y="5" width="14" height="2" />
          </g>
          <g v-else-if="p.k === 'clinic'">
            <path fill="#fff" d="M-9,3L-5,-3L0,-5L5,-3L9,3Z" />
            <path fill="#d8d8d8" d="M-14,3.200H14V5H-14Z" />
          </g>
        </g>
        <g v-for="(b, i) in stops" :key="'bus' + i" :transform="`translate(${b[0]} ${b[1]})`">
          <rect x="-12" y="-12" width="24" height="24" rx="8" fill="#c6c6c6" />
          <rect x="-11" y="-11" width="22" height="22" rx="7.500" fill="#e9e9e9" />
          <rect x="-9.800" y="-9.800" width="19.600" height="19.600" rx="6" fill="#474747" />
          <path fill="#fff" fill-rule="evenodd" d="M-3.500,-6.500H3.500Q5.800,-6.500 5.800,-4V7H3.500V5.500H-3.500V7H-5.800V-4Q-5.800,-6.500 -3.500,-6.500ZM-3.800,-3.500V.2H3.800V-3.500ZM-4,2V3.700H-2V2ZM2,2V3.700H4V2Z" />
        </g>
        <path fill="#86a652" d="M959.500,735C955,717 947,702 934,677C926,663 922.500,655 922.500,644A37,37 0 0 1 996.500,644C996.500,655 993,663 985,677C972,702 964,717 959.500,735Z" />
        <circle cx="959.500" cy="644.500" r="20" fill="#fff" />
      </svg>
    </main>
  </div>
</template>

<style>
body { margin: 0; overflow: hidden; background: #fff; }
</style>

<style scoped>
.page {
  width: 1920px;
  height: 1080px;
  overflow: hidden;
  font-family: "Noto Sans CJK JP", "Noto Sans", sans-serif;
}
.topbar {
  box-sizing: border-box;
  height: 91px;
  background: #ededed;
  border-bottom: 1px solid #dcdcdc;
  display: flex;
  justify-content: flex-end;
  padding: 31px 88px 0 0;
}
.search { display: block; }
.header {
  box-sizing: border-box;
  height: 125px;
  border-bottom: 1px solid #dcdcdc;
  display: flex;
  justify-content: space-between;
  padding: 0 85px 0 100px;
}
.logo svg { display: block; overflow: visible; }
.brand {
  font: italic 75px "Liberation Serif", serif;
  fill: #424242;
  stroke: #424242;
  stroke-width: .7px;
}
.tagline {
  font: 21px Lato, "Open Sans", sans-serif;
  fill: #757575;
}
.nav {
  display: flex;
  width: 1125px;
  margin-top: -1px;
  height: 127px;
}
.nav a {
  box-sizing: border-box;
  flex: 1;
  height: 125px;
  border-left: 1px solid #dcdcdc;
  display: flex;
  align-items: center;
  justify-content: center;
  padding-bottom: 4px;
  font-size: 21.8px;
  white-space: nowrap;
  color: #111;
}
.nav a.heavy { border-left: 2px solid #d3d3d3; }
.nav a.active {
  flex: 0 0 189px;
  height: 127px;
  padding-bottom: 6px;
  background: #443300;
  border-color: #443300;
  color: #fff;
}
.content {
  box-sizing: border-box;
  margin: 80px 83px 0 90px;
  height: 800px;
  border: 1px solid #dcdcdc;
  padding: 132px 0 0 63px;
}
.map { display: block; font-family: "Noto Sans CJK JP", "Noto Sans", sans-serif; }
.house { fill: #e5e5e5; stroke: #dadada; stroke-width: 3px; }
.outline { fill: #f9f9f9; stroke: #dedede; stroke-width: 3px; }
.casing path { fill: none; stroke: #f2f2f2; stroke-linejoin: round; }
.road path { fill: none; stroke: #cfcfcf; stroke-linejoin: round; stroke-linecap: round; }
.creek { fill: none; stroke: #adadad; stroke-width: 1.3px; stroke-linejoin: round; }
.label, .street text {
  paint-order: stroke;
  stroke: #f8f8f8;
  stroke-width: 4px;
  stroke-linejoin: round;
}
.label { fill: #7c7c7c; }
.label.mid { fill: #686868; }
.label.town { fill: #4c4c4c; font-weight: 500; }
.street text { font-size: 21px; font-weight: 700; fill: #494949; }
.pin-shadow { fill: #bbb; opacity: .6; }
.glyph { fill: #fff; font-size: 18px; font-weight: 700; }
</style>
